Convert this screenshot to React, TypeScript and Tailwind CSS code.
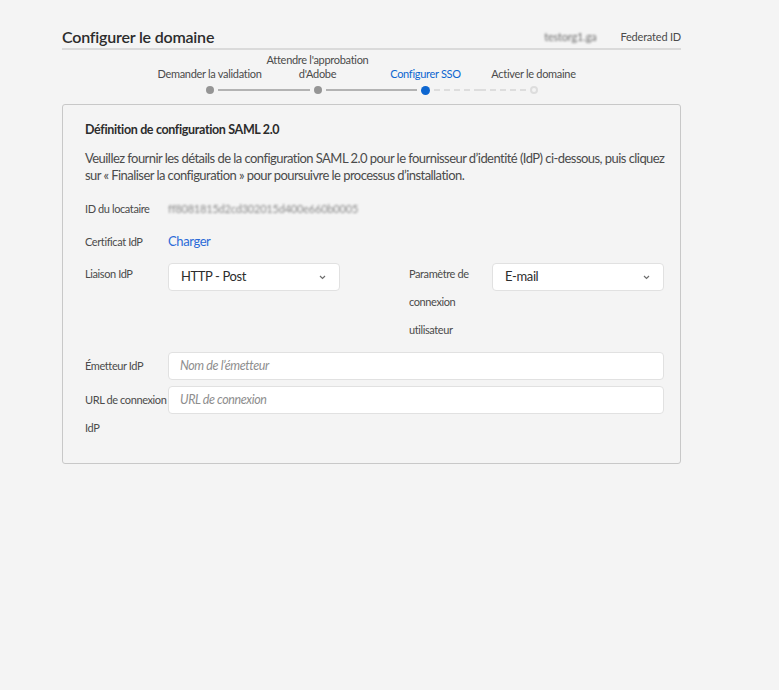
import React from 'react';

const font = { fontFamily: 'Lato, "Noto Sans", sans-serif' };

type Step = { label: string[]; state: 'done' | 'current' | 'todo' };

const steps: Step[] = [
  { label: ['Demander la validation'], state: 'done' },
  { label: ["Attendre l'approbation", "d'Adobe"], state: 'done' },
  { label: ['Configurer SSO'], state: 'current' },
  { label: ['Activer le domaine'], state: 'todo' },
];

const solid = <div className="h-[2px] bg-[#b3b3b3]" />;
const dashed = (
  <div className="h-[2px] bg-[repeating-linear-gradient(90deg,#dddddd_0_6px,transparent_6px_10px)]" />
);

function Stepper() {
  return (
    <div className="flex justify-center mt-[3px]">
      {steps.map((step, i) => {
        const first = i === 0;
        const last = i === steps.length - 1;
        const leftDashed = step.state === 'todo';
        const rightDashed = step.state !== 'done';
        return (
          <div key={i} className="w-[108px] flex flex-col items-center">
            <div className="h-[28px] flex flex-col justify-end items-center">
              {step.label.map((line) => (
                <span
                  key={line}
                  className={
                    'text-[11px] leading-[14px] tracking-[-0.3px] whitespace-nowrap ' +
                    (step.state === 'current' ? 'text-[#0d66d0]' : 'text-[#4b4b4b]')
                  }
                >
                  {line}
                </span>
              ))}
            </div>
            <div className="flex items-center w-full h-[8px] mt-[5px]">
              <div className="flex-1 pr-[4px]">{!first && (leftDashed ? dashed : solid)}</div>
              {step.state === 'done' && <div className="w-[8px] h-[8px] rounded-full bg-[#959595]" />}
              {step.state === 'current' && <div className="w-[9px] h-[9px] rounded-full bg-[#0d66d0]" />}
              {step.state === 'todo' && <div className="w-[8px] h-[8px] rounded-full border-2 border-[#dddddd]" />}
              <div className="flex-1 pl-[4px]">{!last && (rightDashed ? dashed : solid)}</div>
            </div>
          </div>
        );
      })}
    </div>
  );
}

function Chevron() {
  return (
    <svg width="7" height="5" viewBox="0 0 7 5" className="text-[#6e6e6e]">
      <path d="M1 1 L3.5 3.5 L6 1" fill="none" stroke="currentColor" strokeWidth="1.2" />
    </svg>
  );
}

function Select({ value }: { value: string }) {
  return (
    <div className="mt-[3px] w-[172px] h-[28px] bg-white border border-[#e1e1e1] rounded-[4px] flex items-center justify-between pl-[12px] pr-[13px]">
      <span className="text-[13px] tracking-[-0.4px] text-[#2c2c2c]">{value}</span>
      <Chevron />
    </div>
  );
}

function TextInput({ placeholder }: { placeholder: string }) {
  return (
    <div className="flex-1 h-[28px] bg-white border border-[#e1e1e1] rounded-[4px] flex items-center pl-[11px]">
      <span className="text-[12.5px] italic tracking-[-0.4px] text-[#8e8e8e]">{placeholder}</span>
    </div>
  );
}

const label = 'w-[83px] shrink-0 text-[11px] tracking-[-0.4px] text-[#4b4b4b]';

export default function App() {
  return (
    <div className="min-h-[690px] bg-[#f4f4f4] text-[#2c2c2c]" style={font}>
      <div className="ml-[62px] w-[619px] pt-[25px]">
        <div className="flex items-end justify-between border-b-2 border-[#dadada] pb-[1px] pt-[1px]">
          <h1 className="text-[16px] leading-[21px] font-semibold tracking-[-0.2px] text-[#2c2c2c]">
            Configurer le domaine
          </h1>
          <div className="flex items-center gap-[24px] text-[11px] leading-[21px] tracking-[-0.2px] text-[#4b4b4b]">
            <span className="blur-[1.2px] text-[#6e6e6e]">testorg1.ga</span>
            <span>Federated ID</span>
          </div>
        </div>

        <Stepper />

        <div className="mt-[10px] border border-[#c8c8c8] rounded-[3px] pt-[16px] pb-[21px] pl-[22px] pr-[16px]">
          <h2 className="text-[12.5px] leading-[18px] font-bold tracking-[-0.35px] text-[#2c2c2c]">
            Définition de configuration SAML 2.0
          </h2>
          <p className="mt-[11px] text-[13px] leading-[17px] tracking-[-0.55px] text-[#4b4b4b] whitespace-nowrap">
            Veuillez fournir les détails de la configuration SAML 2.0 pour le fournisseur d’identité (IdP) ci-dessous, puis
            cliquez
            <br />
            sur « Finaliser la configuration » pour poursuivre le processus d’installation.
          </p>

          <div className="mt-[15px] flex items-center h-[20px]">
            <span className={label}>ID du locataire</span>
            <span className="text-[11px] tracking-[-0.2px] text-[#8a8a8a] blur-[1.2px]">
              ff8081815d2cd302015d400e660b0005
            </span>
          </div>

          <div className="mt-[13px] flex items-center h-[20px]">
            <span className={label}>Certificat IdP</span>
            <a className="text-[13px] tracking-[-0.4px] text-[#2b6bd8] cursor-pointer">Charger</a>
          </div>

          <div className="mt-[8px] flex gap-[69px]">
            <div className="flex w-[255px]">
              <span className={label + ' leading-[28px]'}>Liaison IdP</span>
              <Select value="HTTP - Post" />
            </div>
            <div className="flex w-[255px]">
              <span className={label + ' leading-[28px]'}>
                Paramètre de
                <br />
                connexion
                <br />
                utilisateur
              </span>
              <Select value="E-mail" />
            </div>
          </div>

          <div className="mt-[8px] flex">
            <span className={label + ' leading-[28px]'}>Émetteur IdP</span>
            <TextInput placeholder="Nom de l’émetteur" />
          </div>

          <div className="mt-[6px] flex items-start">
            <span className={label + ' leading-[28px]'}>
              URL de connexion
              <br />
              IdP
            </span>
            <TextInput placeholder="URL de connexion" />
          </div>
        </div>
      </div>
    </div>
  );
}
